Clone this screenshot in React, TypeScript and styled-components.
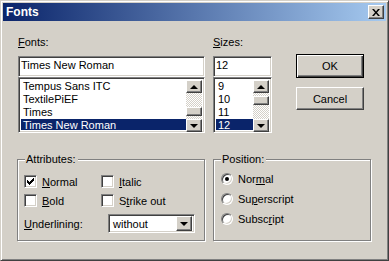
import styled, { createGlobalStyle, css } from "styled-components";

const GlobalStyle = createGlobalStyle`
  html, body {
    margin: 0;
    padding: 0;
    background: #d4d0c8;
  }
  * {
    box-sizing: border-box;
  }
`

const sunken = css`
  border: 1px solid;
  border-color: #808080 #fff #fff #808080;
  box-shadow: inset 1px 1px 0 #404040, inset -1px -1px 0 #d4d0c8;
`

const raised = css`
  border: 1px solid;
  border-color: #fff #404040 #404040 #fff;
  box-shadow: inset -1px -1px 0 #808080, inset 1px 1px 0 #d4d0c8;
  background: #d4d0c8;
`

const Window = styled.div`
  width: 389px;
  height: 261px;
  background: #d4d0c8;
  border: 1px solid;
  border-color: #d4d0c8 #404040 #404040 #d4d0c8;
  box-shadow: inset 1px 1px 0 #fff, inset -1px -1px 0 #808080;
  padding: 2px;
  font-family: "Liberation Sans", Arial, sans-serif;
  font-size: 11px;
  color: #000;
  display: flex;
  flex-direction: column;
`

const TitleBar = styled.div`
  height: 18px;
  background: linear-gradient(to right, #0a246a, #a6caf0);
  display: flex;
  align-items: center;
  justify-content: space-between;
  padding: 0 2px;

  .title {
    color: #fff;
    font-weight: 700;
    font-size: 12px;
    padding-left: 1px;
  }
`

const CloseButton = styled.div`
  ${raised};
  width: 16px;
  height: 14px;
  display: flex;
  align-items: center;
  justify-content: center;
`

const Body = styled.div`
  padding: 15px 0 0 14px;
  display: flex;
  flex-direction: column;
`

const TopRow = styled.div`
  display: flex;
  align-items: flex-start;
`

const Column = styled.div<{ $width: number; $left?: number; $top?: number }>`
  width: ${p => p.$width}px;
  margin-left: ${p => p.$left ?? 0}px;
  padding-top: ${p => p.$top ?? 0}px;
  display: flex;
  flex-direction: column;
`

const Label = styled.div`
  height: 13px;
  line-height: 13px;
  margin-bottom: 7px;
  white-space: nowrap;
`

const TextBox = styled.div`
  ${sunken};
  background: #fff;
  height: 21px;
  line-height: 17px;
  padding: 0 2px;
`

const ListBox = styled.div`
  ${sunken};
  background: #fff;
  height: 56px;
  padding: 2px;
  display: flex;
`

const Items = styled.div`
  flex: 1;
  overflow: hidden;
`

const Item = styled.div<{ $selected?: boolean }>`
  height: 13px;
  line-height: 13px;
  padding-left: 2px;
  white-space: nowrap;
  background: ${p => (p.$selected ? "#0a246a" : "transparent")};
  color: ${p => (p.$selected ? "#fff" : "#000")};
`

const ScrollBar = styled.div`
  width: 16px;
  display: flex;
  flex-direction: column;
`

const ArrowButton = styled.div<{ $height?: number }>`
  ${raised};
  width: 16px;
  height: ${p => p.$height ?? 13}px;
  flex-shrink: 0;
  display: flex;
  align-items: center;
  justify-content: center;
`

const Arrow = styled.span<{ $down?: boolean }>`
  width: 0;
  height: 0;
  border-left: 4px solid transparent;
  border-right: 4px solid transparent;
  ${p =>
    p.$down
      ? css`border-top: 4px solid #000;`
      : css`border-bottom: 4px solid #000;`}
`

const Track = styled.div<{ $size: number }>`
  height: ${p => p.$size}px;
  flex-shrink: 0;
  background-image: conic-gradient(#fff 25%, #d4d0c8 0 50%, #fff 0 75%, #d4d0c8 0);
  background-size: 2px 2px;
`

const Thumb = styled.div<{ $size: number }>`
  ${raised};
  height: ${p => p.$size}px;
  flex-shrink: 0;
`

const Button = styled.div<{ $default?: boolean; $height: number; $top?: number }>`
  width: 68px;
  height: ${p => p.$height}px;
  margin-top: ${p => p.$top ?? 0}px;
  display: flex;
  align-items: center;
  justify-content: center;
  background: #d4d0c8;
  ${p =>
    p.$default
      ? css`
          border: 1px solid #000;
          box-shadow: inset 1px 1px 0 #fff, inset -1px -1px 0 #404040, inset -2px -2px 0 #808080;
        `
      : raised}
`

const BottomRow = styled.div`
  display: flex;
  margin-top: 26px;
`

const GroupBox = styled.div<{ $width: number; $left?: number }>`
  position: relative;
  width: ${p => p.$width}px;
  height: 82px;
  margin-left: ${p => p.$left ?? 0}px;
  border: 1px solid #808080;
  box-shadow: inset 1px 1px 0 #fff, 1px 1px 0 #fff;
`

const Caption = styled.span`
  position: absolute;
  top: -7px;
  left: 7px;
  padding: 0 2px 0 1px;
  line-height: 13px;
  background: #d4d0c8;
`

const AttrGrid = styled.div`
  padding: 15px 0 0 6px;
  display: grid;
  grid-template-columns: 77px auto;
  row-gap: 6px;
`

const CheckRow = styled.label`
  display: flex;
  align-items: center;
  gap: 5px;
  height: 13px;
  white-space: nowrap;
`

const CheckBox = styled.span`
  ${sunken};
  width: 13px;
  height: 13px;
  background: #fff;
  display: flex;
  align-items: center;
  justify-content: center;
  flex-shrink: 0;
`

const UnderlineRow = styled.div`
  grid-column: 1 / 3;
  display: flex;
  align-items: center;
  margin-top: 1px;
  height: 19px;

  .label {
    width: 84px;
  }
`

const Combo = styled.div`
  ${sunken};
  background: #fff;
  width: 87px;
  height: 19px;
  display: flex;
  align-items: center;
  padding: 2px;

  .value {
    flex: 1;
    padding-left: 2px;
  }
`

const RadioList = styled.div`
  padding: 13px 0 0 7px;
  display: flex;
  flex-direction: column;
  gap: 8px;
`

const RadioRow = styled.label`
  display: flex;
  align-items: center;
  gap: 5px;
  height: 12px;
  white-space: nowrap;
`

const Radio = styled.span<{ $checked?: boolean }>`
  width: 12px;
  height: 12px;
  border-radius: 50%;
  background: #fff;
  border: 1px solid;
  border-color: #808080 #fff #fff #808080;
  box-shadow: inset 1px 1px 0 #404040, inset -1px -1px 0 #d4d0c8;
  display: flex;
  align-items: center;
  justify-content: center;
  flex-shrink: 0;

  &::after {
    content: "";
    width: 4px;
    height: 4px;
    border-radius: 50%;
    background: ${p => (p.$checked ? "#000" : "transparent")};
  }
`

const U = styled.span`
  text-decoration: underline;
  text-underline-offset: 1px;
`

const fonts = ["Tempus Sans ITC", "TextilePiEF", "Times", "Times New Roman"]
const sizes = ["9", "10", "11", "12"]
// top row of each 3px tall column of the classic check mark
const checkCols = [2, 3, 4, 3, 2, 1, 0]

function List({ items, selected, before, thumb }: { items: string[]; selected: string; before: number; thumb: number }) {
    const after = 52 - 26 - before - thumb
    return (
        <ListBox>
            <Items>
                {items.map(i => (
                    <Item key={i} $selected={i === selected}>{i}</Item>
                ))}
            </Items>
            <ScrollBar>
                <ArrowButton><Arrow/></ArrowButton>
                <Track $size={before}/>
                <Thumb $size={thumb}/>
                <Track $size={after}/>
                <ArrowButton><Arrow $down/></ArrowButton>
            </ScrollBar>
        </ListBox>
    )
}

function Check({ checked, children }: { checked?: boolean; children: React.ReactNode }) {
    return (
        <CheckRow>
            <CheckBox>
                {checked && (
                    <svg width="7" height="7" viewBox="0 0 7 7" shapeRendering="crispEdges">
                        {checkCols.map((y, x) => (
                            <rect key={x} x={x} y={y} width="1" height="3" fill="#000"/>
                        ))}
                    </svg>
                )}
            </CheckBox>
            <span>{children}</span>
        </CheckRow>
    )
}

export default function App() {
    return (
        <>
            <GlobalStyle/>
            <Window>
                <TitleBar>
                    <span className="title">Fonts</span>
                    <CloseButton>
                        <svg width="8" height="7" viewBox="0 0 8 7">
                            <path d="M0 0h2l2 2.5L6 0h2L5 3.5 8 7H6L4 4.5 2 7H0l3-3.5z" fill="#000"/>
                        </svg>
                    </CloseButton>
                </TitleBar>
                <Body>
                    <TopRow>
                        <Column $width={187} $left={1}>
                            <Label><U>F</U>onts:</Label>
                            <TextBox>Times New Roman</TextBox>
                            <List items={fonts} selected="Times New Roman" before={14} thumb={9}/>
                        </Column>
                        <Column $width={59} $left={8}>
                            <Label><U>S</U>izes:</Label>
                            <TextBox>12</TextBox>
                            <List items={sizes} selected="12" before={3} thumb={9}/>
                        </Column>
                        <Column $width={68} $left={24} $top={18}>
                            <Button $default $height={24}>OK</Button>
                            <Button $height={23} $top={9}>Cancel</Button>
                        </Column>
                    </TopRow>
                    <BottomRow>
                        <GroupBox $width={188}>
                            <Caption>Attributes:</Caption>
                            <AttrGrid>
                                <Check checked><U>N</U>ormal</Check>
                                <Check><U>I</U>talic</Check>
                                <Check><U>B</U>old</Check>
                                <Check>S<U>t</U>rike out</Check>
                                <UnderlineRow>
                                    <span className="label"><U>U</U>nderlining:</span>
                                    <Combo>
                                        <span className="value">without</span>
                                        <ArrowButton $height={15}><Arrow $down/></ArrowButton>
                                    </Combo>
                                </UnderlineRow>
                            </AttrGrid>
                        </GroupBox>
                        <GroupBox $width={158} $left={8}>
                            <Caption>Position:</Caption>
                            <RadioList>
                                <RadioRow><Radio $checked/><span>Nor<U>m</U>al</span></RadioRow>
                                <RadioRow><Radio/><span>Su<U>p</U>erscript</span></RadioRow>
                                <RadioRow><Radio/><span>Subsc<U>r</U>ipt</span></RadioRow>
                            </RadioList>
                        </GroupBox>
                    </BottomRow>
                </Body>
            </Window>
        </>
    )
}
